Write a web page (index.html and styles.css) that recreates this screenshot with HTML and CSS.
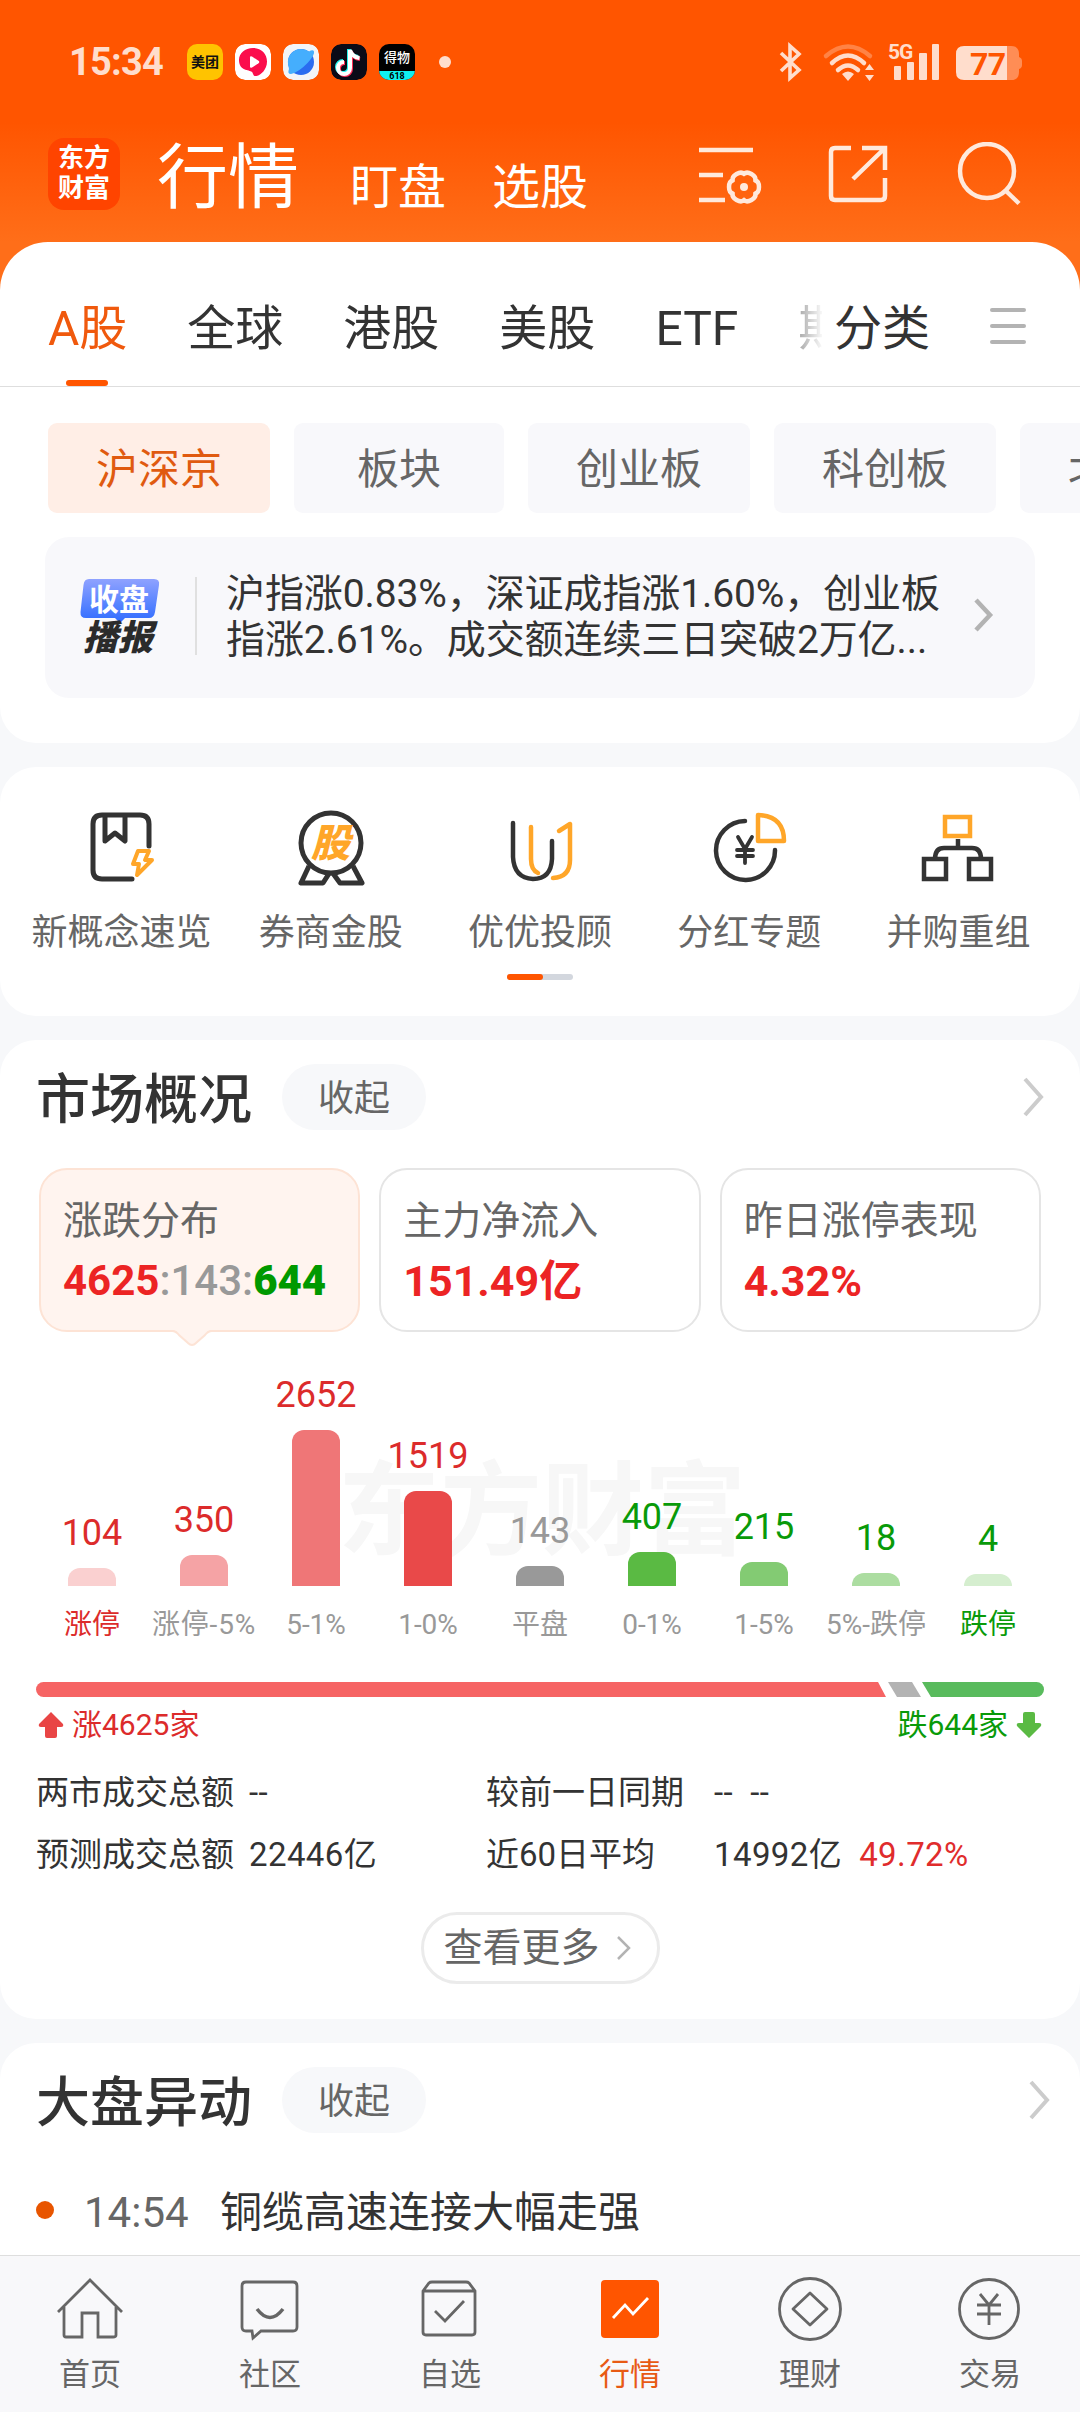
FILE: index.html
```html
<!DOCTYPE html>
<html lang="zh-CN">
<head>
<meta charset="utf-8">
<meta name="viewport" content="width=1080">
<title>行情</title>
<link rel="stylesheet" href="styles.css">
</head>
<body>
<div class="screen">
  <header class="hero">
    <div class="status">
      <div class="status-left">
        <span class="clock">15:34</span>
        <span class="app app-meituan">美团</span>
        <svg class="app" viewBox="0 0 36 36"><rect width="36" height="36" rx="10" fill="#fff"/><path d="M18 4c8 0 14 5.500 14 13.500S26 31 21.500 32c-3.500.8-3-2.500-4.500-4C14 25.500 4 27 4 16 4 9 10 4 18 4z" fill="#fb0d4c"/><path d="M15 13.500v9q0 2 2 1l6.500-4.200q1.500-1.300 0-2.500L17 12.500q-2-1-2 1z" fill="#fff"/></svg>
        <svg class="app" viewBox="0 0 36 36"><rect width="36" height="36" rx="10" fill="#f3f4f7"/><circle cx="18" cy="18" r="13" fill="#2a6cf0"/><path d="M5 20C4 12 10 5 18 5q5 0 8 2.500 4-2.500 5 0 1 3-6 11Q16 28 8 30q-4 0-2-5z" fill="#45aefd"/></svg>
        <svg class="app" viewBox="0 0 36 36"><rect width="36" height="36" rx="10" fill="#0b0b17"/><g fill="none" stroke-width="4"><path d="M18 5v18a6 6 0 1 1-6-6M18 6q2 6 9 7" stroke="#25f4ee"/><path d="M20 7v18a6 6 0 1 1-6-6M20 8q2 6 9 7" stroke="#fe2c55"/><path d="M19 6v18a6 6 0 1 1-6-6M19 6q2 7 9.500 8" stroke="#fff"/></g></svg>
        <span class="app app-dewu"><b>得物</b><i>618</i></span>
        <span class="more-dot"></span>
      </div>
      <svg class="status-right" viewBox="776 42 250 40" fill="#ffddcc">
        <path d="M781 53l18 17-9 8V46l9 8-18 17" fill="none" stroke="#ffddcc" stroke-width="3.600"/>
        <g fill="none" stroke="#ffddcc" stroke-width="4.500" stroke-linecap="round">
          <path d="M826 56q22-19 44 0" stroke="#ff8345"/>
          <path d="M832 63q16-15 32 0M838 70q10-9 20 0"/>
        </g>
        <path d="M842 74q6-5 12 0l-6 7zM865 70l4.500-6 4.500 6zM865 75h9l-4.500 6z"/>
        <text x="888" y="59" class="net">5G</text>
        <rect x="894" y="66" width="7" height="14" rx="1"/><rect x="907" y="62" width="7" height="18" rx="1"/><rect x="919" y="53" width="8" height="27" rx="1"/><rect x="932" y="44" width="7" height="36" rx="1"/>
        <path d="M1007 46h4q8 0 8 8v3q3 1 3 4v4q0 3-3 4v3q0 8-8 8h-4z" fill="#ff8d55"/>
        <path d="M1007 46v34h-43q-8 0-8-8V54q0-8 8-8z"/>
        <text x="970" y="75" class="charge">77</text>
      </svg>
    </div>
    <div class="nav">
      <div class="logo"><span>东方</span><span>财富</span></div>
      <h1>行情</h1>
      <a class="nav-link">盯盘</a>
      <a class="nav-link">选股</a>
      <svg class="nav-icons" viewBox="695 142 330 66" fill="none" stroke="#ffe9dc" stroke-width="4.500">
        <path d="M699 150h54M699 175h24M699 200h26"/>
        <g transform="translate(744 187)" stroke-linejoin="round"><path d="M11.300-6.500C16.200-5.300 16.200 5.300 11.300 6.500 12.600 11.400 3.500 16.600 0 13-3.500 16.600-12.600 11.400-11.300 6.500-16.200 5.300-16.200-5.300-11.300-6.500-12.600-11.400-3.500-16.600 0-13 3.500-16.600 12.600-11.400 11.300-6.500z"/><circle r="4" fill="#ffe9dc" stroke="none"/></g>
        <path d="M851 148h-16q-4 0-4 4v44q0 4 4 4h46q4 0 4-4v-18M862 148h23v22M884 149l-31 30"/>
        <circle cx="987" cy="171" r="27"/><path d="M1005 190l14 13.500"/>
      </svg>
    </div>
  </header>

  <section class="panel">
    <div class="tabs">
      <div class="tab-scroll">
        <a class="tab is-on">A股</a><a class="tab">全球</a><a class="tab">港股</a><a class="tab">美股</a><a class="tab">ETF</a><a class="tab">期</a>
      </div>
      <a class="tab">分类</a>
      <div class="menu"><i></i><i></i><i></i></div>
    </div>
    <div class="pills">
      <a class="pill is-on">沪深京</a><a class="pill">板块</a><a class="pill">创业板</a><a class="pill">科创板</a><a class="pill">北</a>
    </div>
    <div class="brief">
      <svg class="brief-badge" viewBox="78 577 84 78">
        <defs><linearGradient id="badge" x2="0" y2="1"><stop offset="0" stop-color="#8fa2ff"/><stop offset="1" stop-color="#2e6cff"/></linearGradient></defs>
        <path d="M89 579h65q6 0 5 6l-4 27q-1 6-6 6h-24l-5 5-5-5H86q-6 0-5.500-6l3-27q.5-6 5.500-6z" fill="url(#badge)"/>
        <text x="89" y="610" class="badge-top">收盘</text>
        <text x="83" y="650" class="badge-bottom">播报</text>
      </svg>
      <p>沪指涨0.83%，深证成指涨1.60%，创业板<br>指涨2.61%。成交额连续三日突破2万亿...</p>
      <svg class="brief-arrow" viewBox="0 0 24 36"><path d="M4 3l14 15L4 33" fill="none" stroke="#b3b3b3" stroke-width="4.500"/></svg>
    </div>
  </section>

  <section class="card shortcuts">
    <div class="shortcut-row">
      <a><svg viewBox="0 0 80 80" fill="none" stroke="#333" stroke-width="5" stroke-linecap="round" stroke-linejoin="round"><path d="M67 38V16q0-9-9-9H20q-9 0-9 9v46q0 9 9 9h30M23 8v25l10-8 10 8V8"/><path d="M56 43h11l-4 9h7L55 67l2-11h-6z" stroke="#ffa629" stroke-width="4"/></svg>新概念速览</a>
      <a><svg viewBox="0 0 80 80" fill="none" stroke="#333" stroke-width="5" stroke-linejoin="round"><path d="M18 58L10 75h22l7-11M62 58l9 17H49l-8-11"/><circle cx="40" cy="35" r="30" fill="#fff"/><text x="20" y="49" class="stock">股</text></svg>券商金股</a>
      <a><svg viewBox="0 0 80 80" fill="none" stroke="#333" stroke-width="4.500" stroke-linecap="round" stroke-linejoin="round"><path d="M31 19v32q0 11 7 14" stroke="#ffa629"/><path d="M13 15v34q1 21 20 22 18 0 19-20V33"/><path d="M59 23l11-7v36q0 17-17 18" stroke="#ffa629"/></svg>优优投顾</a>
      <a><svg viewBox="0 0 80 80" fill="none" stroke="#333" stroke-width="4.500" stroke-linecap="round" stroke-linejoin="round"><path d="M36 13a29.500 29.500 0 1 0 30 29"/><path d="M29 29l7 12 7-12M36 42v13M28 42h16M28 48h16" stroke-width="3.800"/><path d="M49 7q26 1 26 26H49z" stroke="#ffa629"/></svg>分红专题</a>
      <a><svg viewBox="0 0 80 80" fill="none" stroke="#333" stroke-width="4.500"><path d="M27 9h25v19H27z" stroke="#ffa629"/><path d="M40 31v10M17 51q0-11 9-11h28q9 0 9 11M6 51h22v20H6zM51 51h22v20H51z"/></svg>并购重组</a>
    </div>
    <div class="pager"><i></i></div>
  </section>

  <section class="card market">
    <div class="head">
      <h2>市场概况</h2><a class="fold">收起</a>
      <svg class="head-arrow" viewBox="0 0 24 40"><path d="M3 2l16 18L3 38" fill="none" stroke="#ccc" stroke-width="4"/></svg>
    </div>
    <div class="boxes">
      <div class="box is-on"><span>涨跌分布</span><strong>4625<em>:143:</em><b>644</b></strong>
        <svg class="notch" viewBox="0 0 42 18"><path d="M1 0q4 0 7 4l9 9q4 4 8 0l9-9q3-4 7-4z" fill="#fff4ef"/><path d="M1 1q4 0 7 4l9 8q4 4 8 0l9-8q3-4 7-4" fill="none" stroke="#fde3d5" stroke-width="2"/></svg>
      </div>
      <div class="box"><span>主力净流入</span><strong class="amount">151.49亿</strong></div>
      <div class="box"><span>昨日涨停表现</span><strong class="amount">4.32%</strong></div>
    </div>
    <div class="chart">
      <div class="watermark">东方财富</div>
      <div class="col up"><span>104</span><i style="height:18px;background:#fad0d0"></i><b>涨停</b></div>
      <div class="col up"><span>350</span><i style="height:31px;background:#f5a3a5"></i><small class="wide">涨停-5%</small></div>
      <div class="col up"><span>2652</span><i style="height:156px;background:#ef7677"></i><small>5-1%</small></div>
      <div class="col up"><span>1519</span><i style="height:95px;background:#e94949"></i><small>1-0%</small></div>
      <div class="col flat"><span>143</span><i style="height:20px;background:#999"></i><small>平盘</small></div>
      <div class="col down"><span>407</span><i style="height:34px;background:#5aba43"></i><small>0-1%</small></div>
      <div class="col down"><span>215</span><i style="height:24px;background:#83cb73"></i><small>1-5%</small></div>
      <div class="col down"><span>18</span><i style="height:13px;background:#acdda1"></i><small>5%-跌停</small></div>
      <div class="col down"><span>4</span><i style="height:12px;background:#d5eecf"></i><b>跌停</b></div>
    </div>
    <svg class="ratio" viewBox="0 0 1008 15"><path d="M7.500 0H842l8 15H7.500a7.500 7.500 0 0 1 0-15z" fill="#f66464"/><path d="M852 0h24l9 15h-24z" fill="#b3b3b3"/><path d="M886 0h114.500a7.500 7.500 0 0 1 0 15H895z" fill="#59bb5d"/></svg>
    <div class="ratio-text">
      <span class="up"><svg viewBox="0 0 26 26"><path d="M13 0l12 12q1 3-2 3h-4v9q0 2-2 2H9q-2 0-2-2v-9H3q-3 0-2-3z" fill="#e94545"/></svg>涨4625家</span>
      <span class="down">跌644家<svg viewBox="0 0 26 26"><path d="M13 26l12-12q1-3-2-3h-4V2q0-2-2-2H9Q7 0 7 2v9H3q-3 0-2 3z" fill="#5aba43"/></svg></span>
    </div>
    <div class="stats">
      <span>两市成交总额</span><span class="value">--</span><span>较前一日同期</span><span class="value">-- &nbsp;--</span>
      <span>预测成交总额</span><span class="value">22446亿</span><span>近60日平均</span><span class="value">14992亿<em>49.72%</em></span>
    </div>
    <a class="more">查看更多<svg viewBox="0 0 16 26"><path d="M2 2l11 11L2 24" fill="none" stroke="#b3b3b3" stroke-width="2.500"/></svg></a>
  </section>

  <section class="card moves">
    <div class="head">
      <h2>大盘异动</h2><a class="fold">收起</a>
      <svg class="head-arrow" viewBox="0 0 24 40"><path d="M3 2l16 18L3 38" fill="none" stroke="#ccc" stroke-width="4"/></svg>
    </div>
    <div class="move"><i></i><time>14:54</time><span>铜缆高速连接大幅走强</span></div>
  </section>

  <nav class="tabbar">
    <a><svg viewBox="0 0 70 70"><path d="M3 38L35 6l32 32M9 33v28q0 2 2 2h16V39h16v24h15q3 0 3-2V33"/></svg>首页</a>
    <a><svg viewBox="0 0 70 70"><path d="M11 8h47q4 0 4 4v41q0 4-4 4H26l-8 7-1-7h-6q-4 0-4-4V12q0-4 4-4z"/><path d="M22 35q13 17 26 0" stroke-width="3.500"/></svg>社区</a>
    <a><svg viewBox="0 0 70 70"><path d="M8 17l6-8q1-1 3-1h34q2 0 3 1l6 8v41q0 3-3 3H11q-3 0-3-3zM8 17h52M20 37l10 10 19-20"/></svg>自选</a>
    <a class="is-on"><svg viewBox="0 0 70 70"><rect x="6" y="6" width="58" height="58" rx="4" fill="#ff5500" stroke="none"/><path d="M18 44l12-13 8 9 15-16" stroke="#fff"/></svg>行情</a>
    <a><svg viewBox="0 0 70 70"><circle cx="35" cy="35" r="30.500"/><path d="M35 19l17 16-17 16-17-16z" stroke-linejoin="round"/></svg>理财</a>
    <a><svg viewBox="0 0 70 70"><circle cx="34" cy="35" r="29.500"/><path d="M25 20l9 11 9-11M34 31v20M22 31h24M22 40h24"/></svg>交易</a>
  </nav>
</div>
</body>
</html>
```
FILE: styles.css
```css
* { box-sizing: border-box; }
body { margin: 0; background: #f7f8fa; color: #333; font-family: Roboto, "Noto Sans CJK SC", sans-serif; }
h1, h2, p { margin: 0; font-weight: 400; }
i, em { font-style: normal; }
svg { display: block; flex: none; }
.screen { width: 1080px; height: 2412px; overflow: hidden; display: flex; flex-direction: column; }

.hero { flex: none; height: 290px; background: linear-gradient(#ff5500 0 122px, #ff6e19 242px); }
.status { display: flex; justify-content: space-between; align-items: center; height: 126px; padding: 0 54px 2px 69px; }
.status-left { display: flex; align-items: center; gap: 12px; }
.clock { width: 106px; font: 700 38px/38px Roboto; letter-spacing: -0.8px; color: #ffddcc; }
.app { width: 36px; height: 36px; border-radius: 10px; overflow: hidden; flex: none; text-align: center; }
.app-meituan { background: #ffc300; color: #111; font-size: 14px; line-height: 37px; font-weight: 700; }
.app-dewu { display: flex; flex-direction: column; justify-content: space-between; background: #000; color: #fff; }
.app-dewu b { font-size: 13px; line-height: 27px; font-weight: 500; }
.app-dewu i { background: #0ff0f0; color: #000; font: 700 9px/10px Roboto; }
.more-dot { width: 12px; height: 12px; margin-left: 12px; border-radius: 50%; background: #ffddcc; }
.status-right { width: 250px; height: 40px; overflow: visible; }
.net { font: 700 21px Roboto; letter-spacing: -1px; }
.charge { font: 700 32px Roboto; fill: #ff5500; letter-spacing: -0.5px; }

.nav { display: flex; height: 96px; padding-left: 48px; color: #fff; }
.logo { width: 72px; height: 72px; margin: 12px 37px 0 0; padding-top: 5px; border-radius: 16px; background: #ff4400; display: flex; flex-direction: column; align-items: center; font-weight: 700; font-size: 26px; line-height: 30px; }
.nav h1 { width: 143px; margin-right: 50px; font-size: 71px; line-height: 104px; }
.nav-link { margin-right: 46px; font-size: 48px; line-height: 123px; }
.nav-icons { width: 330px; height: 66px; margin: 16px 0 0 61px; }

.panel { flex: none; height: 501px; margin-top: -48px; background: #fff; border-radius: 48px 48px 36px 36px; overflow: hidden; }
.tabs { display: flex; height: 145px; padding-left: 48px; border-bottom: 1px solid #dedede; }
.tab-scroll { display: flex; gap: 60px; width: 774px; margin-right: 12px; overflow: hidden; -webkit-mask-image: linear-gradient(90deg, #000 740px, rgba(0,0,0,.4) 752px, transparent 776px); mask-image: linear-gradient(90deg, #000 740px, rgba(0,0,0,.4) 752px, transparent 776px); }
.tab { position: relative; flex: none; font-size: 48px; line-height: 174px; height: 144px; }
.tab.is-on { color: #f0590d; }
.tab.is-on::after { content: ""; position: absolute; left: 18px; bottom: 0; width: 42px; height: 6px; border-radius: 3px; background: #ff5500; }
.menu { display: flex; flex-direction: column; gap: 12px; margin: 66px 0 0 60px; }
.menu i { width: 36px; height: 4px; border-radius: 2px; background: #b3b3b3; }
.pills { display: flex; gap: 24px; padding: 36px 0 0 48px; }
.pill { flex: none; min-width: 210px; height: 90px; padding: 0 48px; border-radius: 9px; background: #f8f8fb; color: #666; font-size: 42px; line-height: 94px; text-align: center; }
.pill:last-child { text-align: left; }
.pill.is-on { background: #ffeee6; color: #e05a10; }
.brief { display: flex; align-items: center; height: 161px; margin: 24px 45px 0; padding: 0 35px 3px 33px; border-radius: 24px; background: #f8f8fb; }
.brief-badge { width: 84px; height: 78px; }
.badge-top { font: 700 30px "Noto Sans CJK SC"; fill: #fff; }
.badge-bottom { font: italic 900 35px "Noto Sans CJK SC"; fill: #2b2b2b; }
.brief p { flex: none; width: 777px; height: 78px; margin-left: 33px; padding: 2px 0 0 29px; border-left: 2px solid #e0e0e0; display: flex; align-items: center; font-size: 39px; line-height: 46px; letter-spacing: -0.1px; white-space: nowrap; }
.brief-arrow { width: 24px; height: 36px; margin-top: -2px; }

.card { flex: none; margin-top: 24px; background: #fff; border-radius: 36px; }
.shortcuts { height: 249px; padding: 41px 17px 0; }
.shortcut-row { display: flex; }
.shortcut-row a { flex: 1; display: flex; flex-direction: column; align-items: center; font-size: 36px; line-height: 44px; color: #666; white-space: nowrap; }
.shortcut-row svg { width: 80px; height: 80px; margin-bottom: 23px; }
.stock { font: italic 900 39px "Noto Sans CJK SC"; fill: #ffa629; stroke: none; }
.pager { width: 66px; height: 6px; margin: 19px auto 0; border-radius: 3px; background: #d3d7de; }
.pager i { display: block; width: 36px; height: 6px; border-radius: 3px; background: #ff5500; }

.market { height: 979px; padding: 24px 36px 0; }
.head { display: flex; align-items: center; height: 66px; }
.head h2 { width: 216px; margin-right: 30px; font-size: 54px; line-height: 66px; padding-top: 8px; font-weight: 500; white-space: nowrap; }
.fold { width: 144px; height: 66px; border-radius: 33px; background: #f7f8fa; color: #666; font-size: 36px; line-height: 71px; text-align: center; }
.head-arrow { width: 24px; height: 40px; margin: 0 -2px 0 auto; }
.boxes { display: flex; gap: 19px; margin: 38px 3px 0; }
.box { position: relative; flex: 1; height: 164px; padding: 28px 0 0 22px; border: 2px solid #e5e5e5; border-radius: 28px; white-space: nowrap; }
.box.is-on { background: #fff4ef; border-color: #fde3d5; }
.box span { display: block; font-size: 39px; line-height: 46px; color: #666; }
.box strong { display: block; margin-top: 11px; font-size: 42px; line-height: 52px; font-weight: 700; color: #ec2424; }
.box .amount { font-size: 43px; }
.box em { color: #999; font-weight: 500; }
.box b { color: #009900; }
.notch { position: absolute; left: 130px; top: 160px; width: 42px; height: 18px; }
.chart { position: relative; display: flex; height: 321px; }
.watermark { position: absolute; left: 302px; top: 110px; font-size: 102px; line-height: 140px; font-weight: 700; color: #f7f7f7; }
.col { position: relative; flex: 1; height: 321px; display: flex; flex-direction: column; align-items: center; justify-content: flex-end; white-space: nowrap; }
.col span { font-size: 36px; line-height: 42px; margin-bottom: 14px; }
.col i { width: 48px; border-radius: 12px 12px 0 0; }
.col b, .col small { height: 67px; font-size: 28px; line-height: 78px; font-weight: 400; }
.col small { color: #999; }
.col .wide { letter-spacing: 0.8px; }
.up { color: #dc2b2b; }
.flat { color: #999; }
.down { color: #099a09; }
.ratio { width: 1008px; height: 15px; margin-top: 29px; }
.ratio-text { display: flex; justify-content: space-between; margin-top: 7px; padding: 0 2px; font-size: 30px; line-height: 42px; }
.ratio-text span { display: flex; align-items: center; gap: 8px; }
.ratio-text svg { width: 26px; height: 26px; }
.stats { display: grid; grid-template-columns: 213px 237px 228px 1fr; margin-top: 16px; font-size: 33px; line-height: 62px; white-space: nowrap; }
.stats .value { letter-spacing: 0.4px; }
.stats em { margin-left: 17px; color: #e02c2c; }
.more { display: flex; align-items: center; width: 239px; height: 72px; margin: 26px auto 0; padding-left: 20px; border: 3px solid #ebebeb; border-radius: 36px; color: #666; font-size: 39px; line-height: 66px; white-space: nowrap; }
.more svg { width: 16px; height: 26px; margin-left: 16px; }

.moves { flex: 0 0 212px; padding: 24px 36px 0; border-radius: 36px 36px 0 0; }
.moves .head-arrow { margin-right: -8px; }
.move { display: flex; align-items: center; height: 60px; margin-top: 50px; font-size: 42px; line-height: 60px; }
.move i { width: 18px; height: 18px; margin: -6px 30px 0 0; border-radius: 50%; background: #e85500; }
.move time { width: 136px; color: #666; }

.tabbar { flex: none; display: flex; height: 157px; padding-top: 18px; border-top: 1px solid #dedede; background: #f8f8fa; }
.tabbar a { flex: 1; display: flex; flex-direction: column; align-items: center; font-size: 31px; line-height: 40px; color: #666; }
.tabbar svg { width: 70px; height: 70px; margin-bottom: 11px; fill: none; stroke: #666; stroke-width: 2.8; }
.tabbar .is-on { color: #e85a14; }
```
